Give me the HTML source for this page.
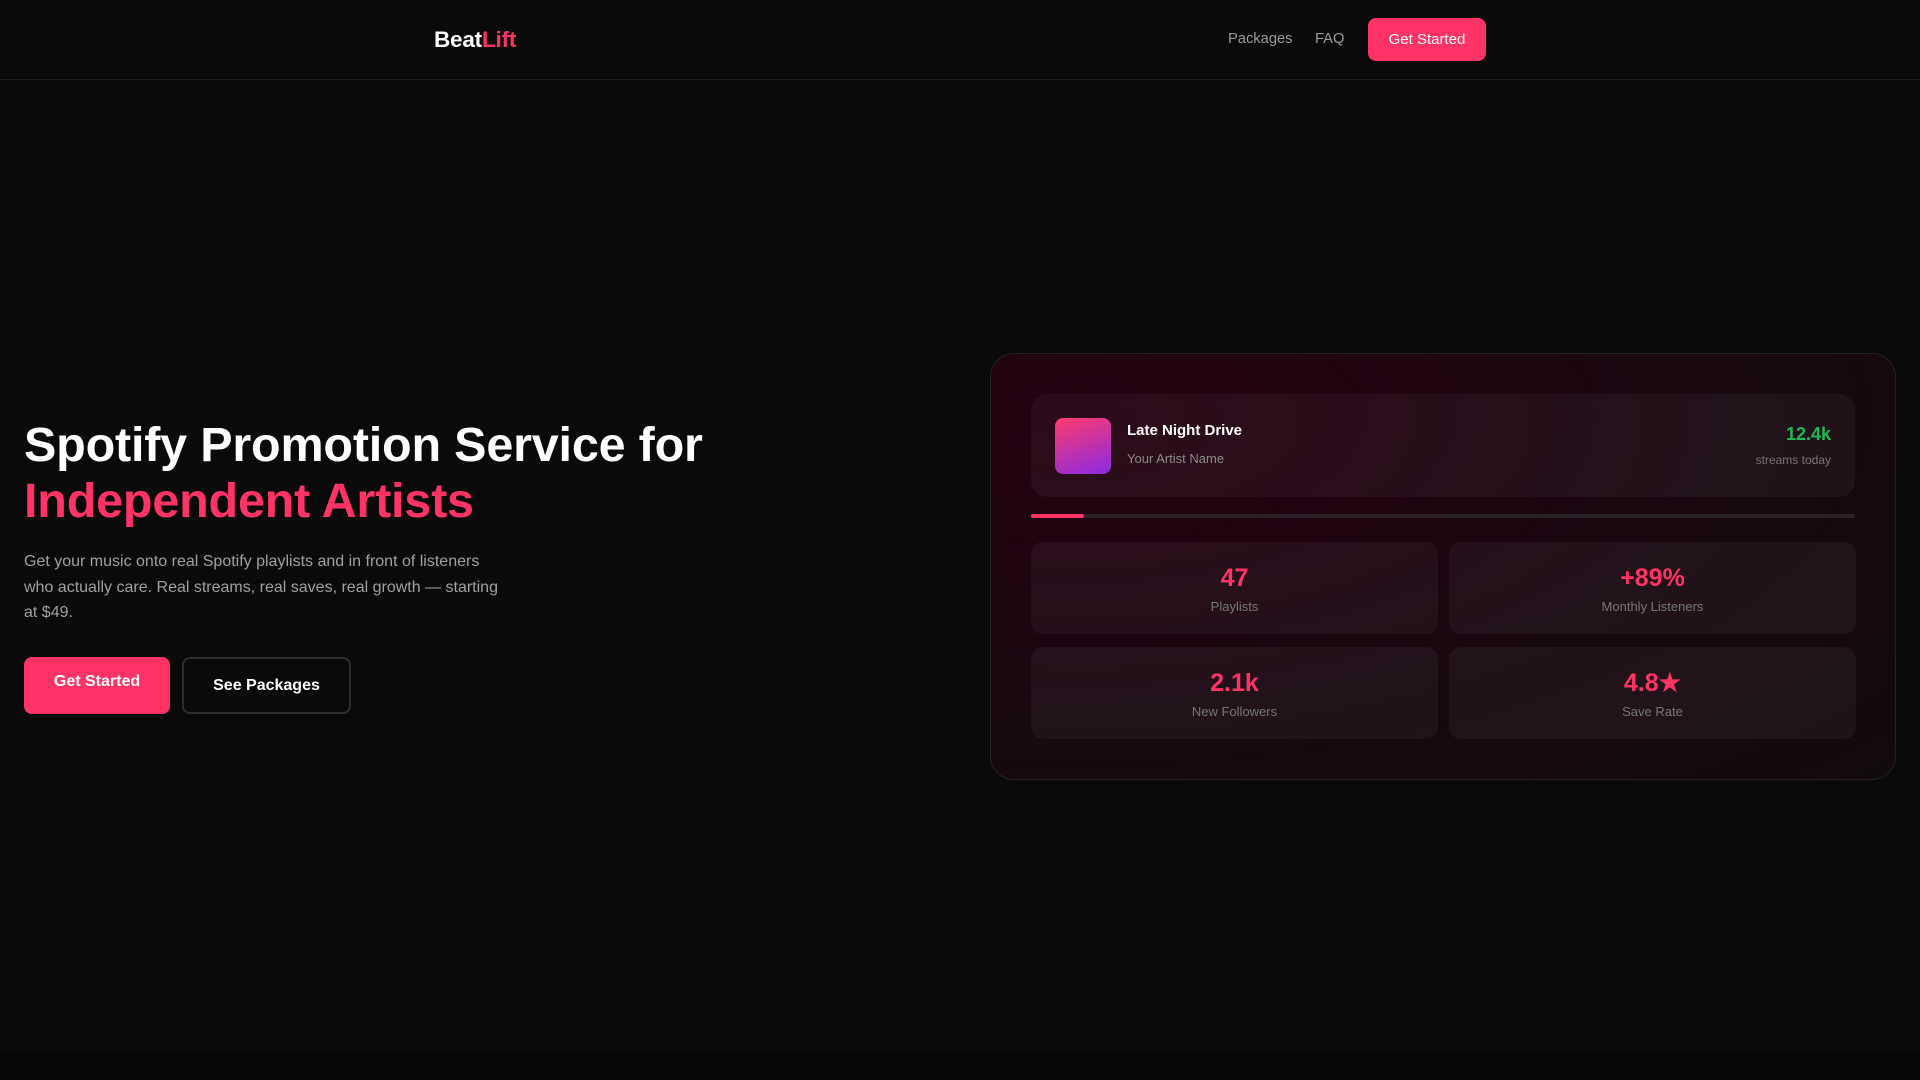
<!DOCTYPE html>
<html><head><meta charset="utf-8"><style>
*{margin:0;padding:0;box-sizing:border-box}
body{width:1920px;height:1080px;background:#070707;font-family:"Liberation Sans",Arial,sans-serif;color:#fff;overflow:hidden;position:relative}
.main{position:absolute;left:0;top:0;width:1920px;height:1052px;background:#0a0a0a}
nav{position:absolute;left:0;top:0;width:1920px;height:80px;border-bottom:1px solid #1c1c1c}
.logo{position:absolute;left:434px;top:27px;font-size:22.5px;font-weight:bold;letter-spacing:-0.2px}
.logo span{color:#ff3366}
.nl{position:absolute;top:31px;font-size:14.7px;color:#9a9a9a}
.nbtn{position:absolute;left:1368px;top:18px;width:118px;height:43px;background:#ff3366;border-radius:8px;font-size:15px;color:#fff;text-align:center;line-height:43px}
h1{position:absolute;left:24px;top:417px;font-size:48.5px;line-height:56px;font-weight:bold;letter-spacing:-0.2px}
h1 span{color:#ff3366}
p.sub{position:absolute;left:24px;top:549px;width:482px;font-size:16px;line-height:25.6px;color:#a0a0a0}
.b1{position:absolute;left:24px;top:657px;width:146px;height:57px;background:#ff3366;border-radius:8px;font-weight:bold;font-size:16px;text-align:center;line-height:50px}
.b2{position:absolute;left:182px;top:657px;width:169px;height:57px;border:2px solid #2e2e2e;border-radius:8px;font-weight:bold;font-size:16px;text-align:center;line-height:53px}
.card{position:absolute;left:990px;top:353px;width:906px;height:427px;border-radius:24px;border:1px solid #222;background:radial-gradient(ellipse at 10% 15%,#240210 0%,#1a0710 50%,#120b0e 100%)}
.track{position:absolute;left:40px;top:40px;width:824px;height:103px;border-radius:16px;background:rgba(255,255,255,0.045)}
.art{position:absolute;left:24px;top:24px;width:56px;height:56px;border-radius:8px;background:linear-gradient(160deg,#ff3a6e,#8a2be2)}
.tt{position:absolute;left:96px;top:28px;font-size:15px;font-weight:bold}
.ta{position:absolute;left:96px;top:57px;font-size:13px;color:#8a8a8a}
.sn{position:absolute;right:24px;top:30px;font-size:18px;font-weight:bold;color:#1db954}
.sl{position:absolute;right:24px;top:59px;font-size:12px;color:#777}
.bar{position:absolute;left:40px;top:160px;width:824px;height:4px;border-radius:2px;background:#2a2226}
.bar i{display:block;width:53px;height:4px;border-radius:2px;background:#ff3366}
.st{position:absolute;width:407px;height:92px;border-radius:12px;background:rgba(255,255,255,0.045);text-align:center}
.st b{display:block;margin-top:21px;font-size:25px;color:#ff3366;line-height:30px}
.st s{display:block;text-decoration:none;margin-top:6px;font-size:13px;color:#777}
</style></head><body>
<div class="main"></div>
<nav><div class="logo">Beat<span>Lift</span></div>
<div class="nl" style="left:1228px">Packages</div><div class="nl" style="left:1315px">FAQ</div>
<div class="nbtn">Get Started</div></nav>
<h1>Spotify Promotion Service for<br><span>Independent Artists</span></h1>
<p class="sub">Get your music onto real Spotify playlists and in front of listeners who actually care. Real streams, real saves, real growth — starting at $49.</p>
<div class="b1">Get Started</div><div class="b2">See Packages</div>
<div class="card">
<div class="track"><div class="art"></div><div class="tt">Late Night Drive</div><div class="ta">Your Artist Name</div><div class="sn">12.4k</div><div class="sl">streams today</div></div>
<div class="bar"><i></i></div>
<div class="st" style="left:40px;top:188px"><b>47</b><s>Playlists</s></div>
<div class="st" style="left:458px;top:188px"><b>+89%</b><s>Monthly Listeners</s></div>
<div class="st" style="left:40px;top:293px"><b>2.1k</b><s>New Followers</s></div>
<div class="st" style="left:458px;top:293px"><b>4.8★</b><s>Save Rate</s></div>
</div>
</body></html>
